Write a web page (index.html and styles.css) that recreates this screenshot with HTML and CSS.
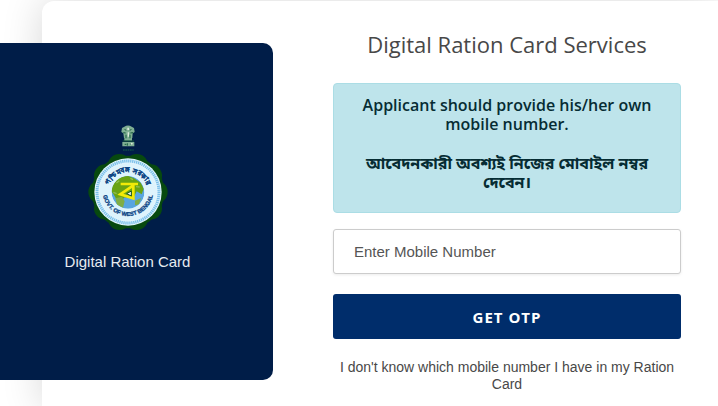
FILE: index.html
```html
<!DOCTYPE html>
<html lang="en">
<head>
<meta charset="utf-8">
<meta name="viewport" content="width=device-width, initial-scale=1">
<title>Digital Ration Card Services</title>
<link rel="stylesheet" href="styles.css">
</head>
<body>
<main class="card">
  <aside class="brand">
    <svg class="seal" viewBox="34 28 246 324" role="img" aria-label="Government of West Bengal">
      <defs>
        <path id="arc-top" d="M98 232a59 59 0 0 1 118 0"/>
        <path id="arc-bottom" d="M81 228a76 76 0 0 0 152 0"/>
        <clipPath id="globe"><circle cx="157" cy="233" r="49"/></clipPath>
      </defs>
      <!-- lion capital -->
      <g fill="#7fae93">
        <path d="M146 36q11-7 22 0l7 4 2 12-6 4-1 14h-25l-2-14-6-4 2-12z"/>
        <path d="M146 70h23v8h-23zM140 82h36v13h-36z"/>
      </g>
      <g fill="none" stroke="#175c3b" stroke-width="3">
        <path d="M147 43l4 5M167 43l-4 5M143 54l7 1M164 55l8-1M151 60v11M163 60v11M141 79h34M147 89h5M155 86v7M165 89h6"/>
      </g>
      <path d="M155 39h5v7h-5zM156 53h4v13h-4zM144 89h5M166 85h5v5h-5z" fill="#dce9dc"/>
      <path d="M142 106h32" stroke="#16624a" stroke-width="3" stroke-dasharray="5 2"/>
      <!-- scalloped border -->
      <g fill="#07490f">
        <circle cx="157" cy="232" r="109"/>
        <circle cx="131" cy="152" r="34"/><circle cx="183" cy="152" r="34"/>
        <circle cx="89" cy="183" r="34"/><circle cx="225" cy="183" r="34"/>
        <circle cx="72" cy="232" r="34"/><circle cx="242" cy="232" r="34"/>
        <circle cx="89" cy="281" r="34"/><circle cx="225" cy="281" r="34"/>
        <circle cx="131" cy="312" r="34"/><circle cx="183" cy="312" r="34"/>
      </g>
      <circle cx="157" cy="232" r="101" fill="#e3f5fd"/>
      <circle cx="157" cy="232" r="93" fill="none" stroke="#7cc0ea" stroke-width="9" stroke-dasharray="4 2"/>
      <circle cx="157" cy="232" r="86" fill="#def3fc"/>
      <g clip-path="url(#globe)">
        <circle cx="157" cy="233" r="49" fill="#58a5df"/>
        <path d="M106 228l5-22 20-18 25-5 19 8 20 13 9 18-6 17-15-9-7 14-13 6-16-2-11 11-12-2-9-16z" fill="#69a313"/>
        <path d="M119 251l20-5 8 14-5 19-18-9zM178 258l18-8-6 19-12 3z" fill="#80ad45"/>
        <path d="M122 205l9-7M113 233l10 4M181 216l11 1M164 191l8 4" stroke="#8fbd52" stroke-width="4"/>
      </g>
      <!-- yellow emblem over the globe -->
      <g fill="none" stroke="#f2ea08" stroke-width="8" stroke-linejoin="miter">
        <path d="M135 208h52M173 208v43l-39-12 38-26"/>
      </g>
      <path d="M153 237l14-8v15z" fill="#eef8ee" stroke="#19551c" stroke-width="3"/>
      <text class="seal-text seal-text-top"><textPath href="#arc-top" startOffset="50%">পশ্চিমবঙ্গ সরকার</textPath></text>
      <text class="seal-text"><textPath href="#arc-bottom" startOffset="50%">GOVT. OF WEST BENGAL</textPath></text>
    </svg>
    <p class="brand-name">Digital Ration Card</p>
  </aside>
  <form class="login">
    <h1 class="title">Digital Ration Card Services</h1>
    <div class="notice">
      <p>Applicant should provide his/her own mobile number.</p>
      <p class="bengali" lang="bn">আবেদনকারী অবশ্যই নিজের মোবাইল নম্বর দেবেন।</p>
    </div>
    <input class="field" type="tel" placeholder="Enter Mobile Number" aria-label="Enter Mobile Number">
    <button class="submit" type="button">GET OTP</button>
    <a class="help" href="#">I don't know which mobile number I have in my Ration Card</a>
  </form>
</main>
</body>
</html>
```
FILE: styles.css
```css
* {
  box-sizing: border-box;
}

body {
  margin: 0;
  overflow: hidden;
  background: #fff;
  color: #495057;
  font-family: "Liberation Sans", Arial, sans-serif;
}

p, h1 {
  margin: 0;
}

.card {
  display: flex;
  align-items: flex-start;
  gap: 60px;
  min-height: 100vh;
  margin: 1px 0 0 42px;
  padding: 30px 37px 12px 0;
  border-radius: 12px 0 0 0;
  background: #fff;
  box-shadow: 0 0 40px rgba(0, 0, 0, 0.16);
}

.brand {
  flex: 0 0 273px;
  display: flex;
  flex-direction: column;
  align-items: center;
  gap: 19px;
  margin: 12px 0 0 -42px;
  padding: 81px 18px 108px 0;
  border-radius: 0 10px 10px 0;
  background: #001d48;
}

.seal {
  width: 82px;
  height: 108px;
}

.seal-text {
  fill: #0d4585;
  stroke: #0d4585;
  stroke-width: 1px;
  font: bold 17px "Liberation Sans", sans-serif;
  text-anchor: middle;
}

.seal-text-top {
  font-size: 21px;
}

.brand-name {
  color: #e6ebf0;
  font-size: 15px;
  line-height: 21px;
}

.login {
  flex: 1;
  display: flex;
  flex-direction: column;
  min-width: 0;
}

.title {
  margin-bottom: 26px;
  color: #484848;
  font: 400 22px/26px "Open Sans", sans-serif;
  text-align: center;
}

.notice {
  display: flex;
  flex-direction: column;
  gap: 20px;
  margin-bottom: 16px;
  padding: 12px 20px 20px;
  border: 1px solid #abdde5;
  border-radius: 4px;
  background: #bee4eb;
  color: #062c33;
  font: 600 16px/19px "Open Sans", "Noto Sans Bengali", sans-serif;
  text-align: center;
}

.bengali {
  font-weight: 700;
}

.field {
  width: 100%;
  height: 45px;
  margin-bottom: 20px;
  padding: 0 20px;
  border: 1px solid #ccc;
  border-radius: 3px;
  background: #fff;
  box-shadow: 0 1px 3px rgba(0, 0, 0, 0.08);
  color: #484848;
  font: 15px "Liberation Sans", Arial, sans-serif;
}

.field::placeholder {
  color: #555;
  opacity: 1;
}

.submit {
  height: 45px;
  margin-bottom: 20px;
  border: 0;
  border-radius: 3px;
  background: #002d6b;
  color: #fff;
  font: 700 15px "Open Sans", sans-serif;
  letter-spacing: 1px;
}

.help {
  color: #484848;
  font-size: 14px;
  line-height: 17px;
  text-align: center;
  text-decoration: none;
}
```
